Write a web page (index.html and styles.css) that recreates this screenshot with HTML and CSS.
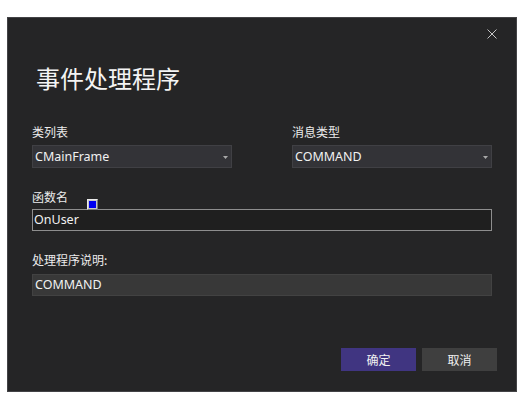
FILE: index.html
```html
<!DOCTYPE html>
<html lang="zh-CN">
<head>
<meta charset="utf-8">
<title>事件处理程序</title>
<link rel="stylesheet" href="styles.css">
</head>
<body>
<div class="dialog">
  <div class="topbar">
    <span class="close" aria-label="关闭">
      <svg width="10" height="10" viewBox="0 0 10 10"><path d="M0.5 0.5L9.5 9.5M9.5 0.5L0.5 9.5" stroke="#c4c4c4" stroke-width="1" fill="none"/></svg>
    </span>
  </div>
  <h1 class="title">事件处理程序</h1>
  <div class="row">
    <div class="field">
      <div class="label">类列表</div>
      <div class="select"><span class="value">CMainFrame</span><svg class="arrow" width="5" height="3" viewBox="0 0 5 3"><polygon points="0,0 5,0 2.5,3" fill="#a8a8a8"/></svg></div>
    </div>
    <div class="field">
      <div class="label">消息类型</div>
      <div class="select"><span class="value">COMMAND</span><svg class="arrow" width="5" height="3" viewBox="0 0 5 3"><polygon points="0,0 5,0 2.5,3" fill="#a8a8a8"/></svg></div>
    </div>
  </div>
  <div class="field spaced">
    <div class="label name-label">函数名<span class="marker"><span class="marker-inner"></span></span></div>
    <div class="input focused input-gap1">OnUser</div>
  </div>
  <div class="field spaced">
    <div class="label">处理程序说明:</div>
    <div class="input plain input-gap2">COMMAND</div>
  </div>
  <div class="footer">
    <button class="btn primary">确定</button>
    <button class="btn">取消</button>
  </div>
</div>
</body>
</html>
```

FILE: styles.css
```css
html, body {
  margin: 0;
  padding: 0;
  background: #ffffff;
}

body {
  padding: 17px 0 0 7px;
}

.dialog {
  box-sizing: border-box;
  width: 510px;
  height: 375px;
  background: #252526;
  border: 1px solid #434346;
  padding: 0 24px;
  color: #f1f1f1;
  font-family: "Noto Sans", "Noto Sans CJK SC", sans-serif;
}

.topbar {
  height: 32px;
  display: flex;
  justify-content: flex-end;
  align-items: center;
}

.close {
  display: flex;
  width: 10px;
  height: 10px;
  margin-right: -5px;
}

.title {
  margin: 12px 0 0 0;
  padding-left: 4px;
  font-family: "Noto Sans CJK SC", sans-serif;
  font-size: 24px;
  font-weight: 400;
  line-height: 32px;
  color: #f4f4f4;
}

.row {
  margin-top: 30px;
  display: grid;
  grid-template-columns: 200px 200px;
  justify-content: space-between;
}

.label {
  font-family: "Noto Sans CJK SC", sans-serif;
  font-size: 12px;
  line-height: 16px;
  color: #ececec;
}

.name-label {
  position: relative;
}

.marker {
  position: absolute;
  left: 55px;
  top: 10px;
  box-sizing: border-box;
  width: 11px;
  height: 11px;
  padding: 1px;
  background: #c8c8c8;
  border: 1px solid;
  border-color: #ececec #7c7c7c #7c7c7c #ececec;
}

.marker-inner {
  display: block;
  width: 7px;
  height: 7px;
  background: #0000f0;
}

.select {
  box-sizing: border-box;
  margin-top: 5px;
  height: 23px;
  background: #333337;
  border: 1px solid #404044;
  display: flex;
  align-items: center;
  justify-content: space-between;
  padding: 0 3px 0 2px;
}

.value, .input {
  font-family: "Noto Sans", sans-serif;
  font-size: 12.5px;
  line-height: 20px;
  color: #f1f1f1;
}

.arrow {
  display: block;
  margin-top: 1px;
}

.spaced {
  margin-top: 21px;
}

.input {
  box-sizing: border-box;
  height: 22px;
  padding: 0 2px 0 1px;
  border: 1px solid;
}

.input-gap1 {
  margin-top: 4px;
}

.input-gap2 {
  margin-top: 6px;
  padding-left: 2px;
}

.focused {
  background: #1f1f1f;
  border-color: #8e8e8e;
}

.plain {
  background: #383838;
  border-color: #424242;
}

.footer {
  margin-top: 52px;
  margin-right: -5px;
  display: flex;
  justify-content: flex-end;
  gap: 6px;
}

.btn {
  width: 75px;
  height: 23px;
  border: none;
  padding: 0;
  margin: 0;
  font-family: "Noto Sans CJK SC", sans-serif;
  font-size: 12px;
  line-height: 23px;
  color: #f1f1f1;
  background: #3f3f3f;
}

.btn.primary {
  background: #403581;
}
```
